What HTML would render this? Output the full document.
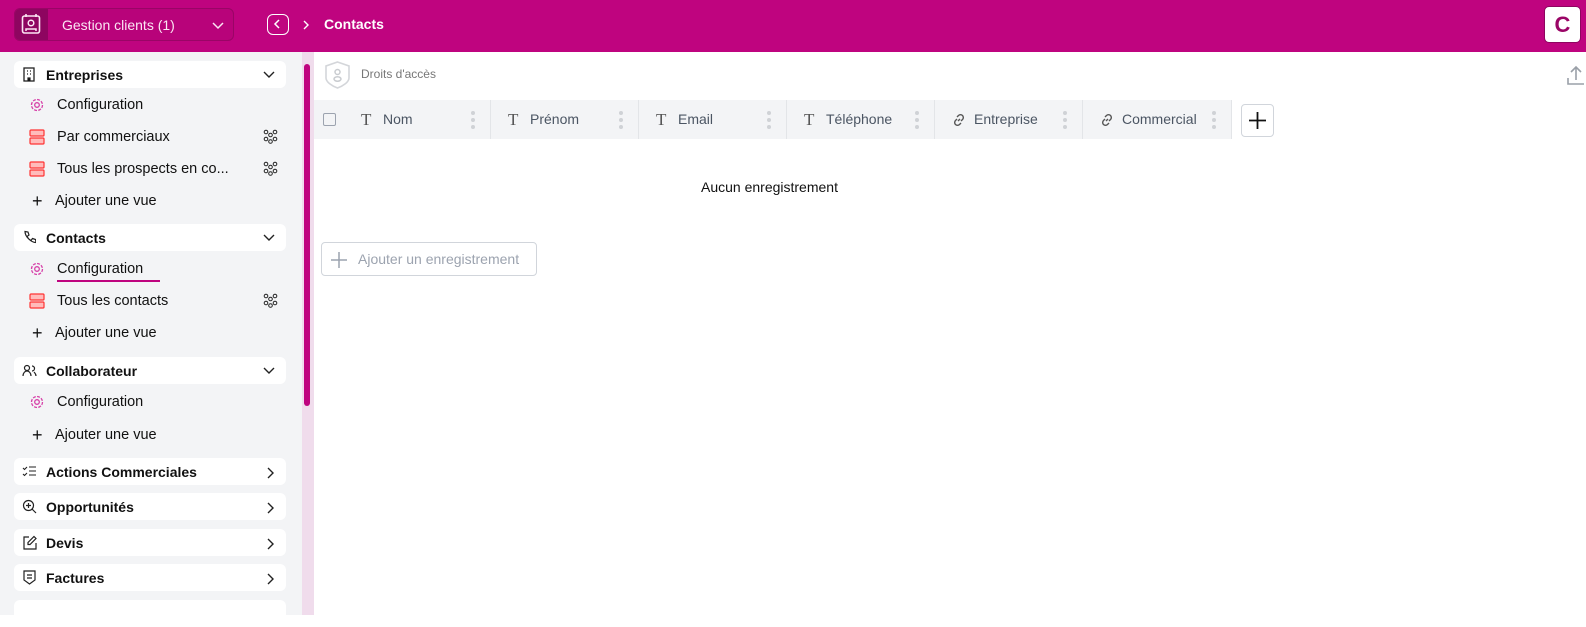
<!DOCTYPE html>
<html><head><meta charset="utf-8"><style>
*{box-sizing:border-box;margin:0;padding:0}
body{width:1586px;height:615px;overflow:hidden;font-family:"Liberation Sans",sans-serif;background:#fff;position:relative;color:#111}
.top{position:absolute;left:0;top:0;width:1586px;height:52px;background:#bf047f}
.app{position:absolute;left:14px;top:8px;width:220px;height:33px;border:1px solid #9a0566;border-radius:6px;background:#b8037a}
.app .ic{position:absolute;left:0;top:0;width:33px;height:31px;background:#8e0560;border-radius:5px 0 0 5px}
.app .t{position:absolute;left:47px;top:8px;color:#fbe6f3;font-size:14px}
.side{position:absolute;left:0;top:52px;width:302px;height:563px;background:#f3f4f6}
.sb{position:absolute;left:302px;top:52px;width:12px;height:563px;background:#f0dcec}
.thumb{position:absolute;left:304px;top:64px;width:6px;height:342px;background:#bf047f;border-radius:3px}
.sec{position:absolute;left:14px;width:272px;height:27px;background:#fff;border-radius:6px;font-weight:bold;font-size:14px}
.sec span{position:absolute;left:32px;top:6px}
.sec svg{position:absolute}
.it{position:absolute;left:57px;font-size:14.5px;color:#111}
.ico{position:absolute}
.th{position:absolute;top:100px;height:39px;background:#f3f4f6;border-right:1px solid #e3e5e8;font-size:14px;color:#4b5563}
.th span{position:absolute;top:11px;left:39px}
.th .T{position:absolute;left:17px;top:10px;font-family:"Liberation Serif",serif;font-size:17px;color:#555}
.dots{position:absolute;right:15px;top:11px;width:4px}
.dots i{display:block;width:4px;height:4px;border-radius:2px;background:#cfd2d6;margin-bottom:3px}
</style></head><body>
<div class="top">
 <div class="app"><div class="ic"><svg width="33" height="31" viewBox="0 0 33 31"><rect x="7.5" y="7" width="17" height="17" rx="2" fill="none" stroke="#fbe6f3" stroke-width="1.6"/><line x1="11" y1="5" x2="11" y2="8" stroke="#fbe6f3" stroke-width="1.6"/><line x1="21" y1="5" x2="21" y2="8" stroke="#fbe6f3" stroke-width="1.6"/><circle cx="16" cy="14" r="2.8" fill="none" stroke="#fbe6f3" stroke-width="1.5"/><path d="M11 22v-2h10v2" fill="none" stroke="#fbe6f3" stroke-width="1.5"/></svg></div><div class="t">Gestion clients (1)</div>
 <svg style="position:absolute;left:196px;top:11px" width="14" height="10"><path d="M2 3l5 5 5-5" fill="none" stroke="#fbe6f3" stroke-width="1.5"/></svg></div>
 <div style="position:absolute;left:267px;top:14px;width:22px;height:21px;border:1.5px solid #fff;border-radius:6px"><svg width="20" height="18"><path d="M11 5l-4 4 4 4" fill="none" stroke="#fff" stroke-width="1.5"/></svg></div>
 <svg style="position:absolute;left:302px;top:19px" width="8" height="12"><path d="M2 2l4 4-4 4" fill="none" stroke="#fff" stroke-width="1.4"/></svg>
 <div style="position:absolute;left:324px;top:16px;color:#fff;font-weight:bold;font-size:14px">Contacts</div>
 <div style="position:absolute;left:1544px;top:6px;width:37px;height:37px;background:#fff;border:1px solid #8e0560;border-radius:5px;color:#9a0566;font-weight:bold;font-size:22px;text-align:center;line-height:35px">C</div>
</div>
<div class="side"></div><div class="sb"></div><div class="thumb"></div>

<div class="sec" style="top:61px"><svg style="left:8px;top:6px" width="14" height="15"><rect x="2" y="1" width="10" height="13" fill="none" stroke="#222" stroke-width="1.3"/><path d="M5 4h1M8 4h1M5 7h1M8 7h1M6 14v-3h2v3" stroke="#222" stroke-width="1.2"/></svg><span>Entreprises</span><svg style="left:248px;top:9px" width="14" height="10"><path d="M2 2l5 5 5-5" fill="none" stroke="#222" stroke-width="1.4"/></svg></div>
<svg class="ico" style="left:29px;top:97px" width="16" height="16"><circle cx="8" cy="8" r="2.3" fill="none" stroke="#d63fa8" stroke-width="1.3"/><circle cx="8" cy="8" r="5.5" fill="none" stroke="#d63fa8" stroke-width="1.3" stroke-dasharray="3 1.3"/></svg>
<div class="it" style="top:97px">Configuration</div>
<svg class="ico" style="left:29px;top:129px" width="16" height="16"><rect x="1" y="1" width="14" height="6" rx="1" fill="#fbb" stroke="#f33" stroke-width="1.2"/><rect x="1" y="9" width="14" height="6" rx="1" fill="#fbb" stroke="#f33" stroke-width="1.2"/></svg>
<div class="it" style="top:129px">Par commerciaux</div>
<svg class="ico" style="left:263px;top:129px" width="15" height="15"><g fill="none" stroke="#222" stroke-width="1"><circle cx="3" cy="3" r="1.8"/><circle cx="12" cy="3" r="1.8"/><circle cx="7.5" cy="6" r="1.8"/><circle cx="3" cy="10" r="1.8"/><circle cx="12" cy="10" r="1.8"/><circle cx="7.5" cy="12.5" r="1.8"/></g></svg>
<svg class="ico" style="left:29px;top:161px" width="16" height="16"><rect x="1" y="1" width="14" height="6" rx="1" fill="#fbb" stroke="#f33" stroke-width="1.2"/><rect x="1" y="9" width="14" height="6" rx="1" fill="#fbb" stroke="#f33" stroke-width="1.2"/></svg>
<div class="it" style="top:161px">Tous les prospects en co...</div>
<svg class="ico" style="left:263px;top:161px" width="15" height="15"><g fill="none" stroke="#222" stroke-width="1"><circle cx="3" cy="3" r="1.8"/><circle cx="12" cy="3" r="1.8"/><circle cx="7.5" cy="6" r="1.8"/><circle cx="3" cy="10" r="1.8"/><circle cx="12" cy="10" r="1.8"/><circle cx="7.5" cy="12.5" r="1.8"/></g></svg>
<div class="it" style="left:32px;top:191px;font-size:18px">+</div><div class="it" style="left:55px;top:193px">Ajouter une vue</div>

<div class="sec" style="top:224px"><svg style="left:8px;top:6px" width="14" height="15"><path d="M3 1.5l3 .5 1 3-2 1.5c1 2 2 3 4 4l1.5-2 3 1 .5 3c-5 0-11-6-11-11z" fill="none" stroke="#222" stroke-width="1.2"/></svg><span>Contacts</span><svg style="left:248px;top:9px" width="14" height="10"><path d="M2 2l5 5 5-5" fill="none" stroke="#222" stroke-width="1.4"/></svg></div>
<svg class="ico" style="left:29px;top:261px" width="16" height="16"><circle cx="8" cy="8" r="2.3" fill="none" stroke="#d63fa8" stroke-width="1.3"/><circle cx="8" cy="8" r="5.5" fill="none" stroke="#d63fa8" stroke-width="1.3" stroke-dasharray="3 1.3"/></svg>
<div class="it" style="top:261px">Configuration</div>
<div style="position:absolute;left:57px;top:280px;width:103px;height:2px;background:#bf047f"></div>
<svg class="ico" style="left:29px;top:293px" width="16" height="16"><rect x="1" y="1" width="14" height="6" rx="1" fill="#fbb" stroke="#f33" stroke-width="1.2"/><rect x="1" y="9" width="14" height="6" rx="1" fill="#fbb" stroke="#f33" stroke-width="1.2"/></svg>
<div class="it" style="top:293px">Tous les contacts</div>
<svg class="ico" style="left:263px;top:293px" width="15" height="15"><g fill="none" stroke="#222" stroke-width="1"><circle cx="3" cy="3" r="1.8"/><circle cx="12" cy="3" r="1.8"/><circle cx="7.5" cy="6" r="1.8"/><circle cx="3" cy="10" r="1.8"/><circle cx="12" cy="10" r="1.8"/><circle cx="7.5" cy="12.5" r="1.8"/></g></svg>
<div class="it" style="left:32px;top:323px;font-size:18px">+</div><div class="it" style="left:55px;top:325px">Ajouter une vue</div>

<div class="sec" style="top:357px"><svg style="left:8px;top:6px" width="15" height="15"><circle cx="5" cy="5" r="2.5" fill="none" stroke="#222" stroke-width="1.2"/><path d="M1 13c0-3 2-5 4-5s4 2 4 5M10 3a2.5 2.5 0 010 5M12 9c1 1 2 2 2 4" fill="none" stroke="#222" stroke-width="1.2"/></svg><span>Collaborateur</span><svg style="left:248px;top:9px" width="14" height="10"><path d="M2 2l5 5 5-5" fill="none" stroke="#222" stroke-width="1.4"/></svg></div>
<svg class="ico" style="left:29px;top:394px" width="16" height="16"><circle cx="8" cy="8" r="2.3" fill="none" stroke="#d63fa8" stroke-width="1.3"/><circle cx="8" cy="8" r="5.5" fill="none" stroke="#d63fa8" stroke-width="1.3" stroke-dasharray="3 1.3"/></svg>
<div class="it" style="top:394px">Configuration</div>
<div class="it" style="left:32px;top:425px;font-size:18px">+</div><div class="it" style="left:55px;top:427px">Ajouter une vue</div>

<div class="sec" style="top:458px"><svg style="left:8px;top:7px" width="15" height="13"><path d="M1 3l1.5 1.5L5 2M1 9l1.5 1.5L5 8M7 2h7M7 6h7M7 10h7" fill="none" stroke="#222" stroke-width="1.1"/></svg><span>Actions Commerciales</span><svg style="left:252px;top:8px" width="10" height="14"><path d="M2 2l5 5-5 5" fill="none" stroke="#222" stroke-width="1.4"/></svg></div>
<div class="sec" style="top:493px"><svg style="left:8px;top:6px" width="15" height="15"><circle cx="6.5" cy="6.5" r="5" fill="none" stroke="#222" stroke-width="1.2"/><path d="M10 10l4 4M6.5 4v5M4 6.5h5" stroke="#222" stroke-width="1.2"/></svg><span>Opportunités</span><svg style="left:252px;top:8px" width="10" height="14"><path d="M2 2l5 5-5 5" fill="none" stroke="#222" stroke-width="1.4"/></svg></div>
<div class="sec" style="top:529px"><svg style="left:8px;top:6px" width="15" height="15"><path d="M7 2H2v12h12V8" fill="none" stroke="#222" stroke-width="1.2"/><path d="M12 1.5l2 2-6 6H6v-2z" fill="none" stroke="#222" stroke-width="1.2"/></svg><span>Devis</span><svg style="left:252px;top:8px" width="10" height="14"><path d="M2 2l5 5-5 5" fill="none" stroke="#222" stroke-width="1.4"/></svg></div>
<div class="sec" style="top:564px"><svg style="left:8px;top:6px" width="15" height="15"><path d="M2 1h11v9l-5.5 4L2 10z" fill="none" stroke="#222" stroke-width="1.2"/><path d="M5 5h5M5 8h5" stroke="#222" stroke-width="1.2"/></svg><span>Factures</span><svg style="left:252px;top:8px" width="10" height="14"><path d="M2 2l5 5-5 5" fill="none" stroke="#222" stroke-width="1.4"/></svg></div>
<div class="sec" style="top:600px"></div>

<svg style="position:absolute;left:324px;top:60px" width="27" height="30"><path d="M13.5 2L25 6v12c0 4-6 8-11.5 10C8 26 2 22 2 18V6z" fill="none" stroke="#d4d6da" stroke-width="1.6"/><circle cx="13.5" cy="12" r="2.5" fill="none" stroke="#c9ccd0" stroke-width="1.5"/><ellipse cx="13.5" cy="19" rx="3.5" ry="2.2" fill="none" stroke="#c9ccd0" stroke-width="1.5"/></svg>
<div style="position:absolute;left:361px;top:67px;font-size:12px;color:#777">Droits d'accès</div>
<svg style="position:absolute;left:1566px;top:64px" width="20" height="24"><path d="M10 3v13M5 8l5-5 5 5M2 14v6h16" fill="none" stroke="#9aa0a8" stroke-width="1.6"/></svg>

<div style="position:absolute;left:314px;top:100px;width:30px;height:39px;background:#f3f4f6"><div style="position:absolute;left:9px;top:13px;width:13px;height:13px;border:1.3px solid #9ca3af;border-radius:2px"></div></div>
<div class="th" style="left:344px;width:147px"><div class="T">T</div><span>Nom</span><div class="dots"><i></i><i></i><i></i></div></div>
<div class="th" style="left:491px;width:148px"><div class="T">T</div><span>Prénom</span><div class="dots"><i></i><i></i><i></i></div></div>
<div class="th" style="left:639px;width:148px"><div class="T">T</div><span>Email</span><div class="dots"><i></i><i></i><i></i></div></div>
<div class="th" style="left:787px;width:148px"><div class="T">T</div><span>Téléphone</span><div class="dots"><i></i><i></i><i></i></div></div>
<div class="th" style="left:935px;width:148px"><svg style="position:absolute;left:16px;top:12px" width="16" height="16"><path d="M7 9l2-2M6 5l1.5-1.5a2.8 2.8 0 014 4L10 9M10 11l-1.5 1.5a2.8 2.8 0 01-4-4L6 7" fill="none" stroke="#555" stroke-width="1.4"/></svg><span>Entreprise</span><div class="dots"><i></i><i></i><i></i></div></div>
<div class="th" style="left:1083px;width:149px"><svg style="position:absolute;left:16px;top:12px" width="16" height="16"><path d="M7 9l2-2M6 5l1.5-1.5a2.8 2.8 0 014 4L10 9M10 11l-1.5 1.5a2.8 2.8 0 01-4-4L6 7" fill="none" stroke="#555" stroke-width="1.4"/></svg><span>Commercial</span><div class="dots"><i></i><i></i><i></i></div></div>
<div style="position:absolute;left:1241px;top:104px;width:33px;height:33px;border:1px solid #d1d5db;border-radius:4px"><svg width="31" height="31"><path d="M15.5 7v17M7 15.5h17" stroke="#111" stroke-width="1.8"/></svg></div>

<div style="position:absolute;left:701px;top:179px;font-size:14px;color:#111">Aucun enregistrement</div>
<div style="position:absolute;left:321px;top:242px;width:216px;height:34px;border:1px solid #d1d5db;border-radius:4px"><svg style="position:absolute;left:8px;top:8px" width="18" height="18"><path d="M9 1v16M1 9h16" stroke="#9ca3af" stroke-width="1.5"/></svg><div style="position:absolute;left:36px;top:8px;font-size:14px;color:#9ca3af">Ajouter un enregistrement</div></div>
</body></html>
